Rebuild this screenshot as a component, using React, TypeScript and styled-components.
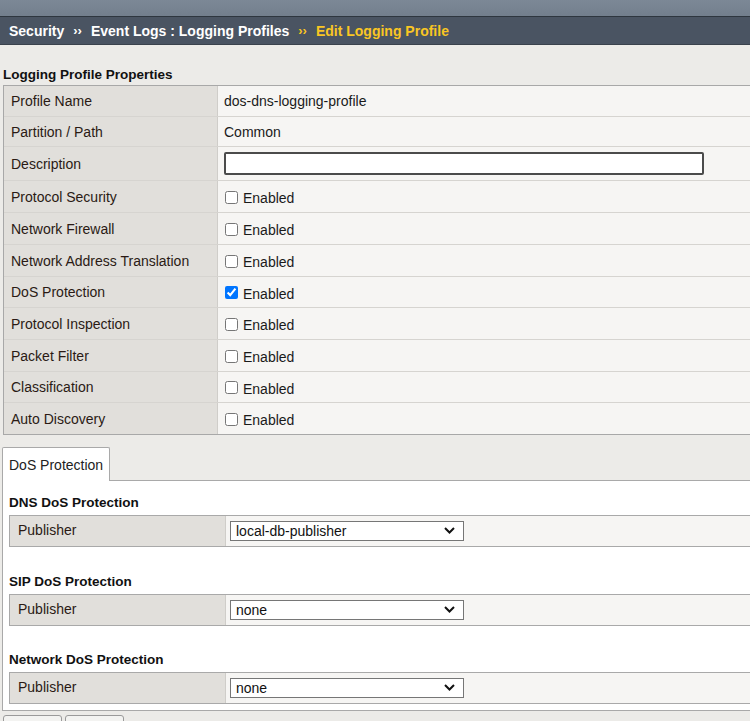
import React from 'react';
import styled, { createGlobalStyle } from 'styled-components';

const GlobalStyle = createGlobalStyle`
  html, body {
    margin: 0;
    padding: 0;
    overflow: hidden;
  }
  body {
    background: #ecebe8;
    font-family: "Liberation Sans", Arial, sans-serif;
    color: #222;
  }
`;

const Page = styled.div`
  width: 770px;
`;

const TopBand = styled.div`
  height: 16px;
  background: linear-gradient(#7c8896, #737f8d);
`;

const Breadcrumb = styled.div`
  display: flex;
  align-items: center;
  height: 27px;
  padding-left: 9px;
  background: #4a5462;
  border-top: 1px solid #2e363f;
  border-bottom: 1px solid #3a424c;
  color: #fff;
  font-size: 14px;
  font-weight: bold;
  white-space: nowrap;
`;

const Crumb = styled.span<{ $current?: boolean }>`
  color: ${p => (p.$current ? '#f9c623' : '#fff')};
`;

const Sep = styled.span<{ $current?: boolean }>`
  margin: 0 9px 0 9px;
  font-size: 13px;
  color: ${p => (p.$current ? '#f9c623' : '#fff')};
`;

const SectionTitle = styled.div`
  padding: 20px 0 0 3px;
  height: 20px;
  line-height: 20px;
  font-size: 13.5px;
  font-weight: bold;
  color: #111;
`;

const PropsTable = styled.div`
  margin-left: 3px;
  border-top: 1px solid #a8a8a8;
  border-left: 1px solid #a8a8a8;
  border-bottom: 1px solid #a8a8a8;
`;

const PropRow = styled.div<{ $h: number }>`
  display: grid;
  grid-template-columns: 214px 1fr;
  height: ${p => p.$h}px;
  border-top: 1px solid #d6d4d0;
  box-sizing: border-box;

  &:first-child {
    border-top: none;
  }
`;

const LabelCell = styled.div`
  display: flex;
  align-items: center;
  padding-left: 7px;
  background: #e1dfdb;
  border-right: 1px solid #cfcdc9;
  font-size: 14px;
  color: #2a1a14;
`;

const ValueCell = styled.div`
  display: flex;
  align-items: center;
  padding-left: 6px;
  background: #f6f5f3;
  font-size: 14px;
  color: #1a1a1a;
`;

const TextInput = styled.input`
  width: 480px;
  height: 23px;
  box-sizing: border-box;
  border: 2px solid #4b4b4b;
  border-radius: 2px;
  background: #fff;
  margin: 0;
`;

const CheckLabel = styled.label`
  display: flex;
  align-items: center;
  gap: 5px;
  padding-top: 3px;
  font-size: 14px;
  color: #1a1a1a;
`;

const Check = styled.input`
  width: 13px;
  height: 13px;
  margin: 0 0 2px 1px;
  accent-color: #0075ff;
`;

const TabStrip = styled.div`
  display: flex;
  margin-top: 12px;
`;

const Tab = styled.div`
  display: flex;
  align-items: center;
  height: 33px;
  margin-left: 2px;
  padding: 0 6px;
  background: #fff;
  border: 1px solid #a9a9a9;
  border-bottom: none;
  border-radius: 2px 2px 0 0;
  font-size: 14px;
  color: #222;
`;

const TabFill = styled.div`
  flex: 1;
  border-bottom: 1px solid #a9a9a9;
`;

const Panel = styled.div`
  margin-left: 2px;
  padding: 12px 0 6px 6px;
  background: #fff;
  border-left: 1px solid #a9a9a9;
  border-bottom: 1px solid #a9a9a9;
`;

const GroupTitle = styled.div<{ $top: number }>`
  margin-top: ${p => p.$top}px;
  height: 20px;
  line-height: 20px;
  margin-bottom: 2px;
  font-size: 13.5px;
  font-weight: bold;
  color: #111;
`;

const GroupTable = styled.div`
  display: grid;
  grid-template-columns: 216px 1fr;
  height: 32px;
  box-sizing: border-box;
  border-top: 1px solid #a9a9a9;
  border-bottom: 1px solid #a9a9a9;
  border-left: 1px solid #a9a9a9;
`;

const GroupLabel = styled.div`
  display: flex;
  align-items: center;
  padding-left: 8px;
  padding-bottom: 3px;
  background: #e1dfdb;
  border-right: 1px solid #cfcdc9;
  font-size: 14px;
  color: #2a1a14;
`;

const GroupValue = styled.div`
  display: flex;
  align-items: center;
  padding-left: 4px;
  background: #f6f5f3;
`;

const SelectWrap = styled.div`
  position: relative;
  width: 234px;
  height: 20px;
`;

const Select = styled.select`
  appearance: none;
  width: 100%;
  height: 100%;
  box-sizing: border-box;
  padding: 0 0 0 5px;
  border: 1px solid #767676;
  border-radius: 0;
  background: #fff;
  font-family: "Liberation Sans", Arial, sans-serif;
  font-size: 14px;
  color: #111;
`;

const Chevron = styled.svg`
  position: absolute;
  right: 9px;
  top: 6px;
  pointer-events: none;
`;

const ButtonRow = styled.div`
  display: flex;
  gap: 3px;
  margin: 4px 0 0 3px;
`;

const Button = styled.button`
  width: 59px;
  height: 22px;
  border: 1px solid #9a9a9a;
  border-radius: 3px;
  background: #f3f3f1;
`;

const properties: { label: string; kind: 'text' | 'input' | 'check'; value?: string; checked?: boolean; h: number }[] = [
  { label: 'Profile Name', kind: 'text', value: 'dos-dns-logging-profile', h: 30 },
  { label: 'Partition / Path', kind: 'text', value: 'Common', h: 30 },
  { label: 'Description', kind: 'input', h: 34 },
  { label: 'Protocol Security', kind: 'check', h: 32 },
  { label: 'Network Firewall', kind: 'check', h: 32 },
  { label: 'Network Address Translation', kind: 'check', h: 32 },
  { label: 'DoS Protection', kind: 'check', checked: true, h: 31 },
  { label: 'Protocol Inspection', kind: 'check', h: 32 },
  { label: 'Packet Filter', kind: 'check', h: 32 },
  { label: 'Classification', kind: 'check', h: 31 },
  { label: 'Auto Discovery', kind: 'check', h: 32 },
];

const groups = [
  { title: 'DNS DoS Protection', value: 'local-db-publisher', top: 0 },
  { title: 'SIP DoS Protection', value: 'none', top: 25 },
  { title: 'Network DoS Protection', value: 'none', top: 24 },
];

const App: React.FC = () => {
  return (
    <Page>
      <GlobalStyle />
      <TopBand />
      <Breadcrumb>
        <Crumb>Security</Crumb>
        <Sep>››</Sep>
        <Crumb>Event Logs : Logging Profiles</Crumb>
        <Sep $current>››</Sep>
        <Crumb $current>Edit Logging Profile</Crumb>
      </Breadcrumb>

      <SectionTitle>Logging Profile Properties</SectionTitle>
      <PropsTable>
        {properties.map(p => (
          <PropRow key={p.label} $h={p.h}>
            <LabelCell>{p.label}</LabelCell>
            <ValueCell>
              {p.kind === 'text' && p.value}
              {p.kind === 'input' && <TextInput type="text" />}
              {p.kind === 'check' && (
                <CheckLabel>
                  <Check type="checkbox" defaultChecked={p.checked} />
                  Enabled
                </CheckLabel>
              )}
            </ValueCell>
          </PropRow>
        ))}
      </PropsTable>

      <TabStrip>
        <Tab>DoS Protection</Tab>
        <TabFill />
      </TabStrip>
      <Panel>
        {groups.map(g => (
          <div key={g.title}>
            <GroupTitle $top={g.top}>{g.title}</GroupTitle>
            <GroupTable>
              <GroupLabel>Publisher</GroupLabel>
              <GroupValue>
                <SelectWrap>
                  <Select defaultValue={g.value}>
                    <option value={g.value}>{g.value}</option>
                  </Select>
                  <Chevron width="11" height="7" viewBox="0 0 11 7">
                    <path d="M1 1l4.5 4.5L10 1" fill="none" stroke="#111" strokeWidth="2" />
                  </Chevron>
                </SelectWrap>
              </GroupValue>
            </GroupTable>
          </div>
        ))}
      </Panel>
      <ButtonRow>
        <Button />
        <Button />
      </ButtonRow>
    </Page>
  );
};

export default App;
